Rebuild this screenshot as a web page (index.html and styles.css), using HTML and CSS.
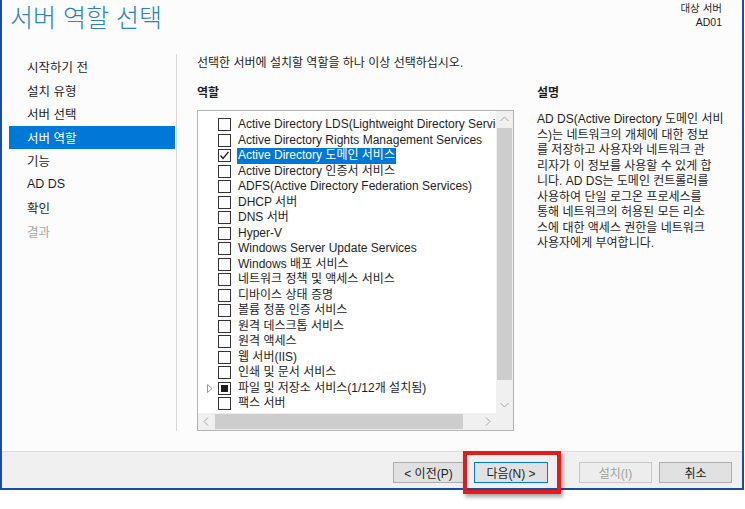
FILE: index.html
```html
<!DOCTYPE html>
<html lang="ko">
<head>
<meta charset="utf-8">
<title>서버 역할 선택</title>
<link rel="stylesheet" href="styles.css">
</head>
<body>
<div class="window">
  <header class="header">
    <h1 class="title">서버 역할 선택</h1>
    <div class="target"><div>대상 서버</div><div>AD01</div></div>
  </header>
  <div class="main">
    <nav class="nav">
      <div class="nav-item">시작하기 전</div>
      <div class="nav-item">설치 유형</div>
      <div class="nav-item">서버 선택</div>
      <div class="nav-item active">서버 역할</div>
      <div class="nav-item">기능</div>
      <div class="nav-item">AD DS</div>
      <div class="nav-item">확인</div>
      <div class="nav-item disabled">결과</div>
    </nav>
    <section class="content">
      <p class="intro">선택한 서버에 설치할 역할을 하나 이상 선택하십시오.</p>
      <div class="columns">
        <div class="roles">
          <div class="label">역할</div>
          <div class="listbox">
            <div class="items">
              <div class="row"><span class="exp"></span><span class="cb"></span><span class="txt">Active Directory LDS(Lightweight Directory Services)</span></div>
              <div class="row"><span class="exp"></span><span class="cb"></span><span class="txt">Active Directory Rights Management Services</span></div>
              <div class="row sel"><span class="exp"></span><span class="cb"><svg width="11" height="11" viewBox="0 0 11 11"><path d="M1.5 5.5 L4 8.5 L9.5 1.8" fill="none" stroke="#1a1a1a" stroke-width="1.3"/></svg></span><span class="txt">Active Directory 도메인 서비스</span></div>
              <div class="row"><span class="exp"></span><span class="cb"></span><span class="txt">Active Directory 인증서 서비스</span></div>
              <div class="row"><span class="exp"></span><span class="cb"></span><span class="txt">ADFS(Active Directory Federation Services)</span></div>
              <div class="row"><span class="exp"></span><span class="cb"></span><span class="txt">DHCP 서버</span></div>
              <div class="row"><span class="exp"></span><span class="cb"></span><span class="txt">DNS 서버</span></div>
              <div class="row"><span class="exp"></span><span class="cb"></span><span class="txt">Hyper-V</span></div>
              <div class="row"><span class="exp"></span><span class="cb"></span><span class="txt">Windows Server Update Services</span></div>
              <div class="row"><span class="exp"></span><span class="cb"></span><span class="txt">Windows 배포 서비스</span></div>
              <div class="row"><span class="exp"></span><span class="cb"></span><span class="txt">네트워크 정책 및 액세스 서비스</span></div>
              <div class="row"><span class="exp"></span><span class="cb"></span><span class="txt">디바이스 상태 증명</span></div>
              <div class="row"><span class="exp"></span><span class="cb"></span><span class="txt">볼륨 정품 인증 서비스</span></div>
              <div class="row"><span class="exp"></span><span class="cb"></span><span class="txt">원격 데스크톱 서비스</span></div>
              <div class="row"><span class="exp"></span><span class="cb"></span><span class="txt">원격 액세스</span></div>
              <div class="row"><span class="exp"></span><span class="cb"></span><span class="txt">웹 서버(IIS)</span></div>
              <div class="row"><span class="exp"></span><span class="cb"></span><span class="txt">인쇄 및 문서 서비스</span></div>
              <div class="row"><span class="exp"><svg width="6" height="9" viewBox="0 0 6 9"><path d="M0.5 0.5 L5 4.5 L0.5 8.5 Z" fill="none" stroke="#9a9a9a" stroke-width="1"/></svg></span><span class="cb mixed"></span><span class="txt">파일 및 저장소 서비스(1/12개 설치됨)</span></div>
              <div class="row"><span class="exp"></span><span class="cb"></span><span class="txt">팩스 서버</span></div>
            </div>
            <div class="vscroll">
              <div class="sb-btn"><svg width="17" height="17" viewBox="0 0 17 17"><path d="M4.5 10 L8.5 6 L12.5 10" fill="none" stroke="#a6a6a6" stroke-width="1"/></svg></div>
              <div class="vthumb"></div>
              <div class="vtrack"></div>
              <div class="sb-btn"><svg width="17" height="17" viewBox="0 0 17 17"><path d="M4.5 7 L8.5 11 L12.5 7" fill="none" stroke="#a6a6a6" stroke-width="1"/></svg></div>
            </div>
            <div class="hscroll">
              <div class="sb-btn"><svg width="17" height="17" viewBox="0 0 17 17"><path d="M10 4.5 L6 8.5 L10 12.5" fill="none" stroke="#a6a6a6" stroke-width="1"/></svg></div>
              <div class="hthumb"></div>
              <div class="htrack"></div>
              <div class="sb-btn"><svg width="17" height="17" viewBox="0 0 17 17"><path d="M7 4.5 L11 8.5 L7 12.5" fill="none" stroke="#a6a6a6" stroke-width="1"/></svg></div>
            </div>
            <div class="corner"></div>
          </div>
        </div>
        <div class="desc">
          <div class="label">설명</div>
          <div class="desc-text">
            <div class="line">AD DS(Active Directory 도메인 서비</div>
            <div class="line">스)는 네트워크의 개체에 대한 정보</div>
            <div class="line">를 저장하고 사용자와 네트워크 관</div>
            <div class="line">리자가 이 정보를 사용할 수 있게 합</div>
            <div class="line">니다. AD DS는 도메인 컨트롤러를</div>
            <div class="line">사용하여 단일 로그온 프로세스를</div>
            <div class="line">통해 네트워크의 허용된 모든 리소</div>
            <div class="line">스에 대한 액세스 권한을 네트워크</div>
            <div class="line">사용자에게 부여합니다.</div>
          </div>
        </div>
      </div>
    </section>
  </div>
  <footer class="footer">
    <div class="btn btn-prev">&lt; 이전(P)</div>
    <div class="btn btn-next default">다음(N) &gt;</div>
    <div class="btn btn-install disabled">설치(I)</div>
    <div class="btn btn-cancel">취소</div>
  </footer>
</div>
<div class="callout"></div>
</body>
</html>
```
FILE: styles.css
```css
html, body {
  margin: 0;
  padding: 0;
}
body {
  background: #ffffff;
  font-family: "Liberation Sans", "Noto Sans CJK KR", sans-serif;
  font-size: 12px;
  color: #1e1e1e;
  position: relative;
  width: 745px;
  height: 509px;
  overflow: hidden;
}
.window {
  width: 744px;
  height: 490px;
  box-sizing: border-box;
  border: 2px solid #1b4f9b;
  border-top: 0;
  background: #fcfcfc;
  display: flex;
  flex-direction: column;
}
.header {
  height: 54px;
  flex: none;
  display: flex;
  justify-content: space-between;
  align-items: flex-start;
}
.title {
  margin: 0;
  padding: 0 0 0 8px;
  font-family: "Noto Sans CJK KR", sans-serif;
  font-weight: 300;
  font-size: 25px;
  line-height: 32px;
  color: #2a85bb;
}
.target {
  padding: 1px 20px 0 0;
  text-align: right;
  font-size: 10.5px;
  line-height: 14px;
}
.main {
  display: flex;
  height: 397px;
  flex: none;
  box-sizing: border-box;
  padding-bottom: 20px;
}
.nav {
  width: 175px;
  flex: none;
  box-sizing: border-box;
  border-right: 1px solid #d7d7d7;
  padding: 1px 1px 0 7px;
}
.nav-item {
  height: 23.5px;
  display: flex;
  align-items: center;
  padding-left: 18px;
  font-size: 12.5px;
  white-space: nowrap;
}
.nav-item.active {
  background: #0078d7;
  color: #ffffff;
}
.nav-item.disabled {
  color: #a8a8a8;
}
.content {
  padding-left: 20px;
  padding-top: 1px;
  flex: 1;
}
.intro {
  margin: 0 0 14px;
  height: 16px;
  line-height: 16px;
  white-space: nowrap;
}
.columns {
  display: flex;
  gap: 23px;
}
.label {
  font-weight: bold;
  height: 16px;
  line-height: 16px;
  margin-bottom: 9px;
}
.listbox {
  width: 317px;
  height: 321px;
  box-sizing: border-box;
  border: 1px solid #b4b4b4;
  background: #ffffff;
  display: grid;
  grid-template-columns: 298px 17px;
  grid-template-rows: 302px 17px;
}
.items {
  overflow: hidden;
  padding-top: 6px;
  box-sizing: border-box;
}
.row {
  height: 15.5px;
  display: flex;
  align-items: center;
  white-space: nowrap;
}
.exp {
  width: 20px;
  flex: none;
  display: flex;
  align-items: center;
  padding-left: 9px;
  box-sizing: border-box;
}
.cb {
  width: 13px;
  height: 13px;
  box-sizing: border-box;
  border: 1px solid #333333;
  background: #ffffff;
  flex: none;
  margin-right: 6px;
  display: flex;
  align-items: center;
  justify-content: center;
}
.cb.mixed::after {
  content: "";
  width: 7px;
  height: 7px;
  background: #1e1e1e;
}
.txt {
  padding: 0 1px;
  line-height: 15.5px;
  height: 15.5px;
}
.row.sel .txt {
  background: #0078d7;
  color: #ffffff;
}
.vscroll {
  background: #f0f0f0;
  display: flex;
  flex-direction: column;
}
.hscroll {
  background: #f0f0f0;
  display: flex;
}
.sb-btn {
  width: 17px;
  height: 17px;
  flex: none;
}
.sb-btn svg {
  display: block;
}
.vthumb {
  height: 252px;
  background: #cdcdcd;
  margin: 0 1px;
}
.vtrack {
  flex: 1;
}
.hthumb {
  width: 248px;
  background: #cdcdcd;
  margin: 1px 0;
}
.htrack {
  flex: 1;
}
.corner {
  background: #f0f0f0;
}
.desc {
  width: 195px;
}
.desc-text {
  padding-top: 2px;
}
.line {
  height: 15.5px;
  line-height: 15.5px;
  white-space: nowrap;
}
.footer {
  height: 37px;
  flex: none;
  box-sizing: border-box;
  border-top: 1px solid #dcdcdc;
  background: #f0f0f0;
  display: flex;
  justify-content: flex-end;
  align-items: flex-start;
  padding: 10px 10px 0 0;
}
.btn {
  height: 21px;
  width: 73px;
  box-sizing: border-box;
  border: 1px solid #adadad;
  background: #e1e1e1;
  display: flex;
  align-items: center;
  justify-content: center;
  white-space: nowrap;
}
.btn-prev {
  width: 71px;
}
.btn-next {
  margin-left: 10px;
  width: 74px;
}
.btn-install {
  margin-left: 31px;
}
.btn-cancel {
  margin-left: 7px;
}
.btn.default {
  border-color: #0078d7;
}
.btn.disabled {
  color: #a0a0a0;
  background: #ededed;
  border-color: #c6c6c6;
}
.callout {
  position: absolute;
  left: 463px;
  top: 451px;
  width: 98px;
  height: 43px;
  box-sizing: border-box;
  border: 4px solid #e51a1a;
  box-shadow: 2px 3px 4px rgba(0, 0, 0, 0.35);
}
```
